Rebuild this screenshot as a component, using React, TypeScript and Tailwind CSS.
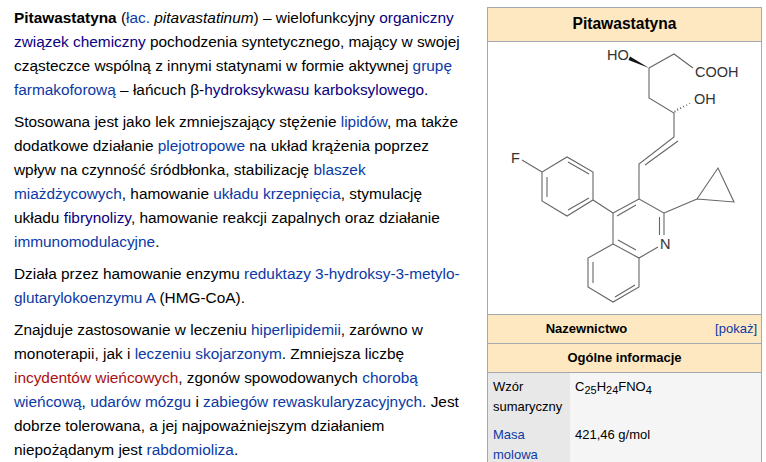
const N = "text-[#0b0080]";
const B = "text-[#0b3aa5]";
const R = "text-[#a81010]";

function Molecule() {
  const lines = "M649 68L674 54L693 68M649 68V98L674 113V137L639 164V199L664 213V235M659.500 217V235M664 213L697 199M639 199L613 213V244L639 258L658 247M636 205L617 216M613 244L588 258V287L613 302L639 287V258M636 250L618 240M593 262V283M615 297L635 285M613 213L593 200L567 216L542 201V172L567 157L593 172V200M568 162L589 174M547 177V197M568 210L589 198M542 172L522 160M697 199L718 168L734 202L697 199M678 141L645 165";
  return (
    <svg viewBox="488 42 273 272" className="block w-[273px] h-[272px]">
      <path d={lines} fill="none" stroke="#666" strokeWidth="1.1" />
      <polygon points="649,68 630,56.500 628.500,60" fill="#111" />
      <path d="M675 112.500l0-2M678 110.700l-.7-2.200M681 109l-.8-1.800M684 107.300l-.8-1.500M687 105.700l-.6-1.200M690 104l-.5-.8" stroke="#555" strokeWidth="1" fill="none" />
      <g fontFamily="'Liberation Sans', sans-serif" fontSize="14.500" fill="#333">
        <text x="607" y="60">HO</text>
        <text x="695" y="77">COOH</text>
        <text x="694" y="104">OH</text>
        <text x="511" y="163">F</text>
        <text x="660" y="249">N</text>
      </g>
    </svg>
  );
}

export default function App() {
  return (
    <div className="w-[766px] h-[462px] overflow-hidden bg-white flex font-['Liberation_Sans',Arial,sans-serif] text-[13px] leading-[20px] text-black">
      <div className="w-[487px] shrink-0 pl-[14px] pt-[6px] flex flex-col gap-[8px] whitespace-nowrap text-[15.4px] leading-[24px]">
        <p>
          <b>Pitawastatyna</b> (<span className={B}>łac.</span> <i>pitavastatinum</i>) – wielofunkcyjny <span className={N}>organiczny</span><br />
          <span className={N}>związek chemiczny</span> pochodzenia syntetycznego, mający w swojej<br />
          cząsteczce wspólną z innymi statynami w formie aktywnej <span className={B}>grupę</span><br />
          <span className={B}>farmakoforową</span> – łańcuch β-<span className={N}>hydroksykwasu karboksylowego</span>.
        </p>
        <p>
          Stosowana jest jako lek zmniejszający stężenie <span className={B}>lipidów</span>, ma także<br />
          dodatkowe działanie <span className={B}>plejotropowe</span> na układ krążenia poprzez<br />
          wpływ na czynność śródbłonka, stabilizację <span className={B}>blaszek</span><br />
          <span className={B}>miażdżycowych</span>, hamowanie <span className={B}>układu krzepnięcia</span>, stymulację<br />
          układu <span className={N}>fibrynolizy</span>, hamowanie reakcji zapalnych oraz działanie<br />
          <span className={B}>immunomodulacyjne</span>.
        </p>
        <p>
          Działa przez hamowanie enzymu <span className={B}>reduktazy 3-hydroksy-3-metylo-</span><br />
          <span className={B}>glutarylokoenzymu A</span> (HMG-CoA).
        </p>
        <p>
          Znajduje zastosowanie w leczeniu <span className={B}>hiperlipidemii</span>, zarówno w<br />
          monoterapii, jak i <span className={B}>leczeniu skojarzonym</span>. Zmniejsza liczbę<br />
          <span className={R}>incydentów wieńcowych</span>, zgonów spowodowanych <span className={B}>chorobą</span><br />
          <span className={B}>wieńcową</span>, <span className={B}>udarów mózgu</span> i <span className={B}>zabiegów rewaskularyzacyjnych</span>. Jest<br />
          dobrze tolerowana, a jej najpoważniejszym działaniem<br />
          niepożądanym jest <span className={B}>rabdomioliza</span>.
        </p>
      </div>
      <div className="w-[275px] shrink-0 mt-[7px] h-[455px] border border-b-0 border-[#a2a9b1] flex flex-col">
        <div className="h-[34px] shrink-0 bg-[#fde8c1] border-b border-[#a2a9b1] flex items-center justify-center font-bold text-[15.6px] pb-[2px]">Pitawastatyna</div>
        <div className="h-[273px] shrink-0 border-b border-[#a2a9b1]"><Molecule /></div>
        <div className="h-[29px] shrink-0 bg-[#fde8c1] border-b border-[#a2a9b1] relative flex items-center justify-center font-bold">
          <span className="pr-[76px]">Nazewnictwo</span>
          <span className={`absolute right-[4px] font-normal ${B}`}>[pokaż]</span>
        </div>
        <div className="h-[29px] shrink-0 bg-[#fde8c1] border-b border-[#a2a9b1] flex items-center justify-center font-bold">Ogólne informacje</div>
        <div className="flex-1 bg-[#f5f5f5] flex">
          <div className="w-[82px] bg-[#e8e8e8] pl-[5px] pt-[4px]">
            <div className="h-[20px]">Wzór</div>
            <div className="h-[28px]">sumaryczny</div>
            <div className={`h-[20px] ${B}`}>Masa</div>
            <div className={B}>molowa</div>
          </div>
          <div className="pl-[5px] pt-[4px]">
            <div className="h-[48px]">C<sub className="text-[11px]">25</sub>H<sub className="text-[11px]">24</sub>FNO<sub className="text-[11px]">4</sub></div>
            <div>421,46 g/mol</div>
          </div>
        </div>
      </div>
    </div>
  );
}
